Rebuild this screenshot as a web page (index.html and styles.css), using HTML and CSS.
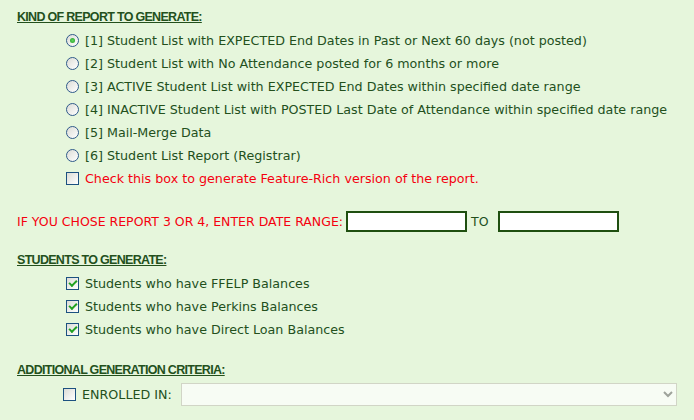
FILE: index.html
```html
<!DOCTYPE html>
<html lang="en">
<head>
  <meta charset="UTF-8">
  <title>Student Report</title>
  <link rel="stylesheet" href="styles.css">
</head>
<body>
  <form class="report-form" id="reportForm">
    <div class="group">
      <h2 class="group-title">KIND OF REPORT TO GENERATE:</h2>
      <div class="options">
        <label class="option"><input type="radio" name="report" value="1" checked> [1] Student List with EXPECTED End Dates in Past or Next 60 days (not posted)</label>
        <label class="option"><input type="radio" name="report" value="2"> [2] Student List with No Attendance posted for 6 months or more</label>
        <label class="option"><input type="radio" name="report" value="3"> [3] ACTIVE Student List with EXPECTED End Dates within specified date range</label>
        <label class="option"><input type="radio" name="report" value="4"> [4] INACTIVE Student List with POSTED Last Date of Attendance within specified date range</label>
        <label class="option"><input type="radio" name="report" value="5"> [5] Mail-Merge Data</label>
        <label class="option"><input type="radio" name="report" value="6"> [6] Student List Report (Registrar)</label>
        <label class="option warn"><input type="checkbox" name="rich"> Check this box to generate Feature-Rich version of the report.</label>
      </div>
    </div>

    <div class="date-range">
      <span class="warn">IF YOU CHOSE REPORT 3 OR 4, ENTER DATE RANGE:</span>
      <input type="text" class="date-box" name="from">
      <span class="to">TO</span>
      <input type="text" class="date-box" name="to">
    </div>

    <div class="group">
      <h2 class="group-title">STUDENTS TO GENERATE:</h2>
      <div class="options">
        <label class="option"><input type="checkbox" name="ffelp" checked> Students who have FFELP Balances</label>
        <label class="option"><input type="checkbox" name="perkins" checked> Students who have Perkins Balances</label>
        <label class="option"><input type="checkbox" name="direct" checked> Students who have Direct Loan Balances</label>
      </div>
    </div>

    <div class="group extra">
      <h2 class="group-title">ADDITIONAL GENERATION CRITERIA:</h2>
      <div class="enrolled">
        <label class="option"><input type="checkbox" name="enrolled"> ENROLLED IN:</label>
        <select class="enrolled-select" disabled>
          <option></option>
        </select>
      </div>
    </div>
  </form>
</body>
</html>
```

FILE: styles.css
```css
body {
  margin: 0;
  padding: 8px 17px;
  background-color: #e6f6dc;
  color: #23501c;
  font-family: "DejaVu Sans", Verdana, sans-serif;
  font-size: 12.7px;
}
.group-title {
  margin: 0;
  font-family: "Liberation Sans", Arial, sans-serif;
  font-size: 12.5px;
  font-weight: bold;
  letter-spacing: -0.7px;
  text-decoration: underline;
  line-height: 18px;
}
.options {
  display: flex;
  flex-direction: column;
  padding: 3px 0 0 49px;
}
.option {
  display: flex;
  align-items: center;
  gap: 6px;
  height: 23px;
  white-space: nowrap;
}
.warn {
  color: #f5000f;
}
input[type="radio"],
input[type="checkbox"] {
  appearance: none;
  margin: 0;
  width: 13px;
  height: 13px;
  border: 1px solid #1c5180;
  background: linear-gradient(135deg, #dcdcd6, #ffffff);
  box-sizing: border-box;
  flex-shrink: 0;
  display: grid;
  place-items: center;
}
input[type="radio"] {
  border-radius: 50%;
  border-color: #2f5a8a;
}
input[type="radio"]:checked::after {
  content: "";
  width: 5px;
  height: 5px;
  border-radius: 50%;
  background: radial-gradient(circle, #5fd35f, #21a121);
}
input[type="checkbox"]:checked::after {
  content: "";
  width: 6px;
  height: 3px;
  border-left: 2px solid #21a121;
  border-bottom: 2px solid #21a121;
  transform: translateY(-1px) rotate(-45deg);
}
.date-range {
  display: flex;
  align-items: center;
  gap: 3px;
  margin: 21px 0 19px;
  font-size: 12.5px;
  white-space: nowrap;
}
.date-box {
  width: 121px;
  height: 21px;
  box-sizing: border-box;
  margin: 0;
  border: 2px solid #1f4f10;
  background: #fff;
}
.date-range .to {
  margin: 0 6px 0 1px;
}
.extra {
  margin-top: 20px;
}
.enrolled {
  display: flex;
  align-items: center;
  gap: 9px;
  padding: 4px 0 0 46px;
}
.enrolled-select {
  width: 500px;
  height: 23px;
  margin: 0;
  border: 1px solid #c9c8bd;
  background: #fff;
}
```
